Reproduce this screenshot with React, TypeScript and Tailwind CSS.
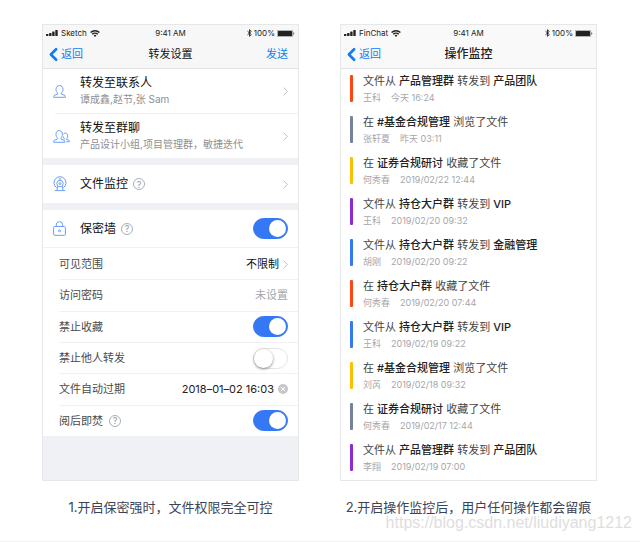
import type { ReactNode } from 'react';
import { ChevronLeft, ChevronRight } from 'lucide-react';

const logs = [
  { color: 'bg-[#fc4714]', before: '文件从', group: '产品管理群', action: '转发到', target: '产品团队', user: '王科', time: '今天 16:24' },
  { color: 'bg-[#74829b]', before: '在', group: '#基金合规管理', action: '浏览了文件', target: '', user: '张轩夏', time: '昨天 03:11' },
  { color: 'bg-[#fcc000]', before: '在', group: '证券合规研讨', action: '收藏了文件', target: '', user: '何秀春', time: '2019/02/22 12:44' },
  { color: 'bg-[#8c2bd6]', before: '文件从', group: '持仓大户群', action: '转发到', target: 'VIP', user: '王科', time: '2019/02/20 09:32' },
  { color: 'bg-[#3478f6]', before: '文件从', group: '持仓大户群', action: '转发到', target: '金融管理', user: '胡刚', time: '2019/02/20 09:22' },
  { color: 'bg-[#fc4714]', before: '在', group: '持仓大户群', action: '收藏了文件', target: '', user: '何秀春', time: '2019/02/20 07:44' },
  { color: 'bg-[#3478f6]', before: '文件从', group: '持仓大户群', action: '转发到', target: 'VIP', user: '王科', time: '2019/02/19 09:22' },
  { color: 'bg-[#fcc000]', before: '在', group: '#基金合规管理', action: '浏览了文件', target: '', user: '刘芮', time: '2019/02/18 09:32' },
  { color: 'bg-[#74829b]', before: '在', group: '证券合规研讨', action: '收藏了文件', target: '', user: '何秀春', time: '2019/02/17 12:44' },
  { color: 'bg-[#8c2bd6]', before: '文件从', group: '产品管理群', action: '转发到', target: '产品团队', user: '李翔', time: '2019/02/19 07:00' },
];

function StatusBar({ carrier }: { carrier: string }) {
  return (
    <div className="grid h-[15px] grid-cols-3 items-center px-[3px] text-[8px] leading-4 text-[#222]">
      <div className="flex items-center gap-[3px]">
        <svg width="12" height="6" viewBox="0 0 12 6" fill="currentColor">
          <rect x="0" y="4" width="2.400" height="2" rx=".5" />
          <rect x="3.100" y="3" width="2.400" height="3" rx=".5" />
          <rect x="6.200" y="1.500" width="2.400" height="4.500" rx=".5" />
          <rect x="9.300" y="0" width="2.400" height="6" rx=".5" />
        </svg>
        <span>{carrier}</span>
        <svg width="10" height="7" viewBox="0 0 10 7" fill="none" stroke="currentColor" strokeWidth="1.4">
          <path d="M.6 2.6a6.2 6.2 0 0 1 8.8 0M2.2 4.3a4 4 0 0 1 5.6 0" />
          <path d="M3.6 5.4a2 2 0 0 1 2.8 0L5 6.9z" fill="currentColor" stroke="none" />
        </svg>
      </div>
      <span className="text-center">9:41 AM</span>
      <div className="flex items-center justify-end gap-[2px]">
        <svg width="5" height="8" viewBox="0 0 5 8" fill="none" stroke="currentColor" strokeWidth=".9">
          <path d="M.5 2.2 4.3 5.6 2.5 7.3V.7l1.8 1.7L.5 5.8" />
        </svg>
        <span>100%</span>
        <svg width="18" height="7" viewBox="0 0 18 7" fill="currentColor">
          <rect x=".3" y=".3" width="15.4" height="6.4" rx="1" fill="none" stroke="currentColor" strokeWidth=".4" />
          <rect x="1" y="1" width="14" height="5" rx=".5" />
          <path d="M16.5 2.2c1 .4 1 2.2 0 2.6z" />
        </svg>
      </div>
    </div>
  );
}

function NavBar({ title, bold, action }: { title: string; bold?: boolean; action?: string }) {
  return (
    <div className="grid h-7 grid-cols-3 items-center px-[10px] text-[11px] text-[#0f7cf6]">
      <button className="-ml-[10px] flex items-center">
        <ChevronLeft className="-mr-[3px] size-[21px]" strokeWidth={3} />
        返回
      </button>
      <h1 className={bold ? 'text-center text-[12px] font-medium text-[#222]' : 'text-center text-[#111]'}>{title}</h1>
      {action && <button className="justify-self-end">{action}</button>}
    </div>
  );
}

function Help() {
  return (
    <button aria-label="?" className="flex size-3 items-center justify-center rounded-full border border-[#a3b1bb] text-[9px] leading-none text-[#8798a5]">
      ?
    </button>
  );
}

function Switch({ id, on }: { id: string; on?: boolean }) {
  return (
    <input
      id={id}
      type="checkbox"
      role="switch"
      defaultChecked={on}
      className="flex h-[21px] w-[35px] appearance-none items-center rounded-full border border-[#e4e4e4] bg-white before:size-[19px] before:rounded-full before:bg-white before:shadow-[0_1px_3px_rgba(0,0,0,0.45)] checked:justify-end checked:border-[#3478f6] checked:bg-[#3478f6] checked:pr-px checked:before:size-[17px] checked:before:shadow-none"
    />
  );
}

function Arrow() {
  return (
    <svg width="5" height="9" viewBox="0 0 5 9" fill="none" stroke="#c0c0c4" strokeWidth="1" className="shrink-0">
      <path d="m.6.600 3.800 3.900L.6 8.400" />
    </svg>
  );
}

function ContactRow({ icon, title, detail }: { icon: ReactNode; title: string; detail: string }) {
  return (
    <a href="#" className="flex h-11 items-center px-[10px]">
      <span className="w-[27px]">{icon}</span>
      <span className="flex-1">
        <span className="block text-[12px] leading-4 text-[#111]">{title}</span>
        <span className="block text-[10px] leading-4 text-[#8e8e93]">{detail}</span>
      </span>
      <Arrow />
    </a>
  );
}

function SettingRow({ label, htmlFor, help, children }: { label: string; htmlFor?: string; help?: boolean; children: ReactNode }) {
  return (
    <div className="flex items-center justify-between border-t border-[#f1f1f2] pr-[10px] text-[11px] first:border-transparent">
      <div className="flex items-center gap-[6px]">
        <label htmlFor={htmlFor} className="text-[#4a4a4a]">{label}</label>
        {help && <Help />}
      </div>
      <div className="flex items-center gap-1">{children}</div>
    </div>
  );
}

function PersonIcon() {
  return (
    <svg width="13" height="13" viewBox="0 0 13 13" fill="none" stroke="#6a9df8" strokeWidth="1">
      <path d="M4.8 8.2C3.4 7.2 3 5.8 3 4.2 3 2 4.5.6 6.5.6S10 2 10 4.2c0 1.6-.4 3-1.8 4V9l3.6 1.4c.5.2.6.6.6 1.9H.6c0-1.300.1-1.700.6-1.900L4.800 9z" />
    </svg>
  );
}

function GroupIcon() {
  return (
    <svg width="17" height="13" viewBox="0 0 17 13" fill="none" stroke="#6a9df8" strokeWidth="1">
      <path d="M4.6 8.2C3.4 7.2 3 5.8 3 4.2 3 2 4.3.6 6.2.6s3.2 1.4 3.2 3.6c0 1.6-.4 3-1.6 4V9l3.4 1.4c.5.2.6.6.6 1.9H.6c0-1.300.1-1.700.6-1.900L4.600 9z" />
      <path d="M10.4 4.4c.5-.9 1.2-1.300 2-1.300 1.500 0 2.300 1.200 2.300 2.800 0 1.300-.4 2.200-1.100 2.900v.6l2.300.9c.4.2.5.6.5 1.400h-3M10.300 6.400c.1 1 .5 1.800 1 2.400v.6" />
    </svg>
  );
}

function CameraIcon() {
  return (
    <svg width="14" height="16" viewBox="0 0 14 16" fill="none" stroke="#6a9df8" strokeWidth="1">
      <path d="M3.600 11.700a6 6 0 1 1 6.800 0" />
      <circle cx="7" cy="7.600" r="3.200" />
      <circle cx="7" cy="7.600" r=".9" />
      <path d="M5.600 3h2.800M4.600 10.300 4 14.200M9.400 10.300l.6 3.900M1.800 14.600h10.400" />
    </svg>
  );
}

function LockIcon() {
  return (
    <svg width="13" height="15" viewBox="0 0 13 15" fill="none" stroke="#6a9df8" strokeWidth="1">
      <rect x=".6" y="5.500" width="11.800" height="8.800" rx="1" />
      <path d="M3.300 5.500V3.800a3.200 3.200 0 0 1 6.400 0v1.700" />
      <circle cx="6.500" cy="9.800" r="1" />
    </svg>
  );
}

function SettingsPhone() {
  return (
    <section className="h-[457px] border border-[#e6e7e9] bg-[#f0f1f4]">
      <header className="border-b border-[#e2e2e4] bg-[#f7f7f7]">
        <StatusBar carrier="Sketch" />
        <NavBar title="转发设置" action="发送" />
      </header>
      <div className="bg-white">
        <ContactRow icon={<PersonIcon />} title="转发至联系人" detail="谭成鑫,赵节,张 Sam" />
        <div className="ml-3 h-px bg-[#f1f1f2]" />
        <ContactRow icon={<GroupIcon />} title="转发至群聊" detail="产品设计小组,项目管理群，敏捷迭代" />
      </div>
      <div className="mt-[7px] flex h-[38px] items-center bg-white px-[10px]">
        <span className="w-[27px]"><CameraIcon /></span>
        <a href="#" className="mr-[5px] text-[12px] text-[#111]">文件监控</a>
        <Help />
        <span className="ml-auto"><Arrow /></span>
      </div>
      <div className="mt-[7px] flex h-[38px] items-center border-b border-[#f1f1f2] bg-white px-[10px]">
        <span className="w-[27px]"><LockIcon /></span>
        <label htmlFor="wall" className="mr-[5px] text-[12px] text-[#111]">保密墙</label>
        <Help />
        <span className="ml-auto"><Switch id="wall" on /></span>
      </div>
      <div className="grid h-[188px] auto-rows-fr bg-white pl-4">
        <SettingRow label="可见范围">
          <button className="flex items-center gap-1 text-[#111]">不限制<Arrow /></button>
        </SettingRow>
        <SettingRow label="访问密码">
          <button className="text-[#a6a6aa]">未设置</button>
        </SettingRow>
        <SettingRow label="禁止收藏" htmlFor="fav">
          <Switch id="fav" on />
        </SettingRow>
        <SettingRow label="禁止他人转发" htmlFor="forward">
          <Switch id="forward" />
        </SettingRow>
        <SettingRow label="文件自动过期">
          <time className="text-[#222]">2018–01–02 16:03</time>
          <button aria-label="清除">
            <svg width="10" height="10" viewBox="0 0 10 10">
              <circle cx="5" cy="5" r="5" fill="#c7c7cb" />
              <path d="m3 3 4 4m0-4L3 7" stroke="#fff" strokeWidth="1" />
            </svg>
          </button>
        </SettingRow>
        <SettingRow label="阅后即焚" htmlFor="burn" help>
          <Switch id="burn" on />
        </SettingRow>
      </div>
    </section>
  );
}

function MonitorPhone() {
  return (
    <section className="h-[457px] border border-[#e6e7e9] bg-white">
      <header className="border-b border-[#e2e2e4] bg-[#f9f9f9]">
        <StatusBar carrier="FinChat" />
        <NavBar title="操作监控" bold />
      </header>
      <ul className="flex flex-col gap-3 px-[9px] pt-[6px]">
        {logs.map((log, i) => (
          <li key={i} className="flex h-[29px] gap-[10px]">
            <span className={`h-[27px] w-[3px] shrink-0 rounded-[1px] ${log.color}`} />
            <div>
              <p className="text-[11px] leading-[13px] text-[#444]">
                {log.before} <b className="font-medium text-[#222]">{log.group}</b> {log.action}{' '}
                <b className="font-medium text-[#222]">{log.target}</b>
              </p>
              <p className="mt-[3px] flex gap-[10px] text-[9px] leading-[13px] text-[#a6a6aa]">
                <span>{log.user}</span>
                <time>{log.time}</time>
              </p>
            </div>
          </li>
        ))}
      </ul>
    </section>
  );
}

export default function App() {
  return (
    <main className="relative min-h-screen border-b border-[#f3f3f3] bg-white pt-6 pr-[43px] pl-[42px] font-[Inter,'Noto_Sans_CJK_SC',sans-serif]">
      <div className="grid grid-cols-2 gap-x-[41px] gap-y-4">
        <SettingsPhone />
        <MonitorPhone />
        <p className="text-center text-[13px] leading-5 whitespace-nowrap text-[#3c4357]">1.开启保密强时，文件权限完全可控</p>
        <p className="text-center text-[13px] leading-5 whitespace-nowrap text-[#3c4357]">2.开启操作监控后，用户任何操作都会留痕</p>
      </div>
      <span className="absolute right-2 bottom-2 font-['Liberation_Sans',sans-serif] text-[16px] leading-5 text-[#dedede]">
        https://blog.csdn.net/liudiyang1212
      </span>
    </main>
  );
}
